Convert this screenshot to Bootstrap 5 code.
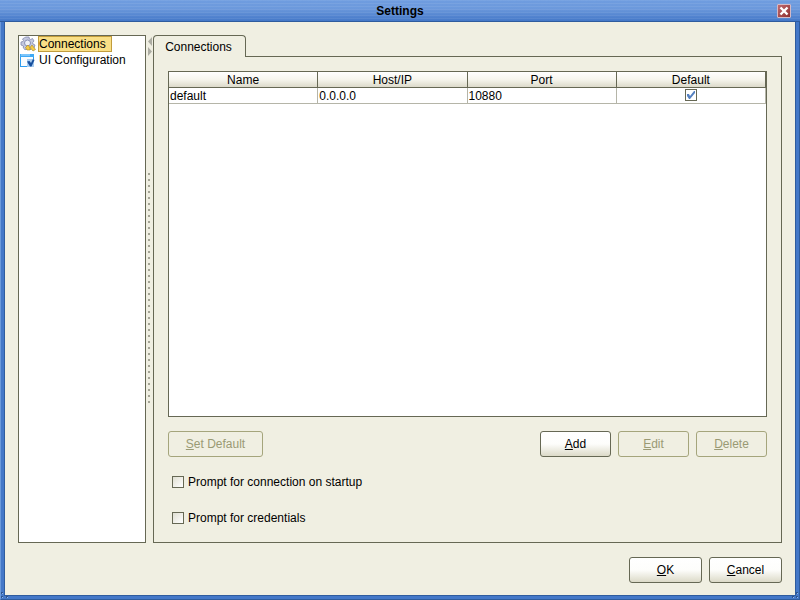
<!DOCTYPE html>
<html lang="en">
<head>
<meta charset="utf-8">
<meta name="viewport" content="width=device-width, initial-scale=1">
<title>Settings</title>
<link href="https://cdn.jsdelivr.net/npm/bootstrap@5.3.0/dist/css/bootstrap.min.css" rel="stylesheet">
<style>
:root { --panel: #f0efe2; --edge: #666854; }
body { font: 12px/16px "Liberation Sans", Arial, sans-serif; color: #000; background: #4478c8; }
.dialog-frame { position: relative; background: #4478c8; border-left: 1px solid #6c9adb; border-right: 1px solid #2f5c9e; border-bottom: 1px solid #2f5c9e; padding: 0 3px 3px; }
.title-bar { height: 22px; margin: 0 -4px; padding: 0 9px; background: repeating-linear-gradient(rgba(255,255,255,.07) 0 1px, transparent 1px 3px), linear-gradient(#6f9de0, #6c99dc 40%, #4478c8); border-bottom: 1px solid #2f5c9e; display: grid; grid-template-columns: 14px 1fr 14px; }
.title-bar h1 { grid-column: 2; font-size: 12px; line-height: 16px; font-weight: bold; }
.close-btn { width: 14px; height: 14px; border: 1px solid #d4b9c5; border-radius: 1px; background: linear-gradient(135deg, #c06a70, #8f302f); }
.dialog-body { background: var(--panel); border: 1px solid #2f5c9e; border-top: 0; padding: 13px 13px 12px; }
.corner { position: absolute; bottom: 0; }
.corner.start { left: 0; }
.corner.end { right: 0; }
.tree-box { width: 128px; background: #fff; border: 1px solid var(--edge); padding: 0 1px; }
.tree-item { height: 16px; color: #000; text-decoration: none; gap: 2px; }
.tree-item span { line-height: 14px; border: 1px solid transparent; padding: 0 5px 0 0; white-space: nowrap; }
.tree-item.active span { background: #f9df86; border-color: #c19c3c; }
.splitter { width: 7px; padding: 2px 0 20px; }
.splitter .grip { width: 3px; height: 234px; background: radial-gradient(circle at 1px 1px, #a5a596 1px, transparent 1px) 0 0 / 3px 6px; }
.tab-strip { height: 22px; margin-bottom: -1px; }
.tab-btn { border: 1px solid var(--edge); border-bottom: 0; border-radius: 4px 4px 0 0; background: var(--panel); padding: 0 2px 0 0; width: 93px; white-space: nowrap; position: relative; z-index: 1; color: #000; }
.tab-body { border: 1px solid var(--edge); padding: 14px 14px 6px; }
.grid-box { background: #fff; border: 1px solid var(--edge); }
.grid-box table { table-layout: fixed; width: 100%; border-collapse: separate; border-spacing: 0; }
.grid-box th { height: 16px; line-height: 14px; padding: 1px 0 0; font-weight: normal; text-align: center; background: linear-gradient(#fff, #f6f5ed 50%, #dcdaca); border-right: 1px solid var(--edge); border-bottom: 1px solid var(--edge); }
.grid-box td { height: 16px; line-height: 14px; padding: 1px 0 0 1px; border-right: 1px solid #b5b5a8; border-bottom: 1px solid #b5b5a8; }
.grid-box td.tick-cell { padding: 0 0 1px; }
.soft-btn { height: 26px; width: 71px; padding: 0; font-size: 12px; line-height: 16px; color: #000; border: 1px solid var(--edge); border-radius: 3px; background: linear-gradient(#fff, #fdfdfb 50%, #dcdac8); }
.soft-btn:disabled { color: #9a9a74; border-color: #a5a57c; background: var(--panel); opacity: 1; }
.soft-btn.wide { width: 95px; }
.soft-btn.foot { width: 73px; }
.tick { appearance: none; width: 12px; height: 12px; margin: 0; border: 1px solid var(--edge); background: linear-gradient(135deg, #e0dfd2, #fff); flex: none; }
.tick:checked { display: block; background: url("data:image/svg+xml,%3Csvg xmlns='http://www.w3.org/2000/svg' viewBox='0 0 10 10'%3E%3Cpath d='M1 4L3 4L4 6L8 1H9V3L4 9H3L1 6Z' fill='%235581c0'/%3E%3C/svg%3E") center / 10px 10px, #fff; }
.action-row { margin-top: 14px; margin-bottom: 7px; }
.btn-set, .foot-row { gap: 7px; }
.option-row { height: 36px; padding-left: 4px; gap: 4px; }
.foot-row { margin-top: 14px; }
</style>
<script src="https://cdn.jsdelivr.net/npm/bootstrap@5.3.0/dist/js/bootstrap.bundle.min.js"></script>
</head>
<body>
<div class="dialog-frame d-flex flex-column min-vh-100">
  <header class="title-bar align-items-center">
    <h1 class="m-0 text-center">Settings</h1>
    <button class="close-btn p-0 d-flex" type="button" aria-label="Close">
      <svg width="12" height="12" viewBox="0 0 12 12"><path d="M2.500 2.500L9.500 9.500M9.500 2.500L2.500 9.500" stroke="#fff" stroke-width="2.400"/></svg>
    </button>
  </header>
  <main class="dialog-body d-flex flex-column flex-grow-1">
    <div class="d-flex flex-grow-1">
      <nav class="tree-box flex-shrink-0" aria-label="Categories">
        <a class="tree-item active d-flex align-items-center" href="#connections">
          <svg width="16" height="16" viewBox="0 0 16 16"><path d="M6 1h3l.4 2 1.300.5L12.500 2.500 14 5l-1.300 1.500.2 1.500L15 9l-1 3-2 .2-1 1.300-4-.3-2 .5L3.300 12l.2-2L1 9V6l2-.5.5-1L2.500 3 4.500 1.700z" fill="#c4c9df" stroke="#8389ad" stroke-width=".8"/><circle cx="7.500" cy="7" r="3" fill="#eef0f8" stroke="#8990b5"/><path d="M5.500 11.500L8 9l2 2.500v2.500H7zM10 11.500l2-2.500 3.500 4.500-2.500 1.500z" fill="#f5cb45" stroke="#a58425" stroke-width=".6"/></svg>
          <span>Connections</span>
        </a>
        <a class="tree-item d-flex align-items-center" href="#ui">
          <svg width="16" height="16" viewBox="0 0 16 16"><rect x=".5" y="2.500" width="13" height="12" fill="#f8fcff" stroke="#2e9df0"/><path d="M0 2h14v3H0z" fill="#3fa9f5"/><path d="M1 3h9" stroke="#b8e0ff"/><path d="M7 7h7v8H7z" fill="#a9cdf0"/><path d="M7 9.500l2.500-.5 1.500 2 2-4 1.500 1-3 6.500H10z" fill="#174f9e"/></svg>
          <span>UI Configuration</span>
        </a>
      </nav>
      <div class="splitter d-flex flex-column align-items-center flex-shrink-0" aria-hidden="true">
        <svg width="7" height="19" viewBox="0 0 7 19"><path d="M6 0v9L2 4.500zM2 10v9l4-4.500z" fill="#adada3"/></svg>
        <div class="grip my-auto"></div>
      </div>
      <section class="d-flex flex-column flex-grow-1" id="connections">
        <div class="tab-strip d-flex" role="tablist">
          <button class="tab-btn" type="button" role="tab" aria-selected="true">Connections</button>
        </div>
        <div class="tab-body d-flex flex-column flex-grow-1">
          <div class="grid-box flex-grow-1">
            <table>
              <thead><tr><th>Name</th><th>Host/IP</th><th>Port</th><th>Default</th></tr></thead>
              <tbody><tr><td>default</td><td>0.0.0.0</td><td>10880</td><td class="tick-cell"><input class="tick mx-auto" type="checkbox" aria-label="Default connection" checked></td></tr></tbody>
            </table>
          </div>
          <div class="action-row d-flex justify-content-between">
            <button class="btn soft-btn wide" type="button" disabled><u>S</u>et Default</button>
            <div class="btn-set d-flex">
              <button class="btn soft-btn" type="button"><u>A</u>dd</button>
              <button class="btn soft-btn" type="button" disabled><u>E</u>dit</button>
              <button class="btn soft-btn" type="button" disabled><u>D</u>elete</button>
            </div>
          </div>
          <div class="option-row d-flex align-items-center"><input class="tick" type="checkbox" id="startup"><label for="startup">Prompt for connection on startup</label></div>
          <div class="option-row d-flex align-items-center"><input class="tick" type="checkbox" id="credentials"><label for="credentials">Prompt for credentials</label></div>
        </div>
      </section>
    </div>
    <footer class="foot-row d-flex justify-content-end">
      <button class="btn soft-btn foot" type="button"><u>O</u>K</button>
      <button class="btn soft-btn foot" type="button"><u>C</u>ancel</button>
    </footer>
  </main>
  <svg class="corner start" width="8" height="8" viewBox="0 0 8 8" aria-hidden="true"><path d="M0 1h2v2H0zM0 5h2v2H0zM5 5h2v2H5z" fill="#2d5590"/><path d="M1 2h1v1H1zM1 6h1v1H1zM6 6h1v1H6z" fill="#8fb4e8"/></svg>
  <svg class="corner end" width="8" height="8" viewBox="0 0 8 8" aria-hidden="true"><path d="M5 1h2v2H5zM5 5h2v2H5zM1 5h2v2H1z" fill="#2d5590"/><path d="M6 2h1v1H6zM6 6h1v1H6zM2 6h1v1H2z" fill="#8fb4e8"/></svg>
</div>
</body>
</html>
